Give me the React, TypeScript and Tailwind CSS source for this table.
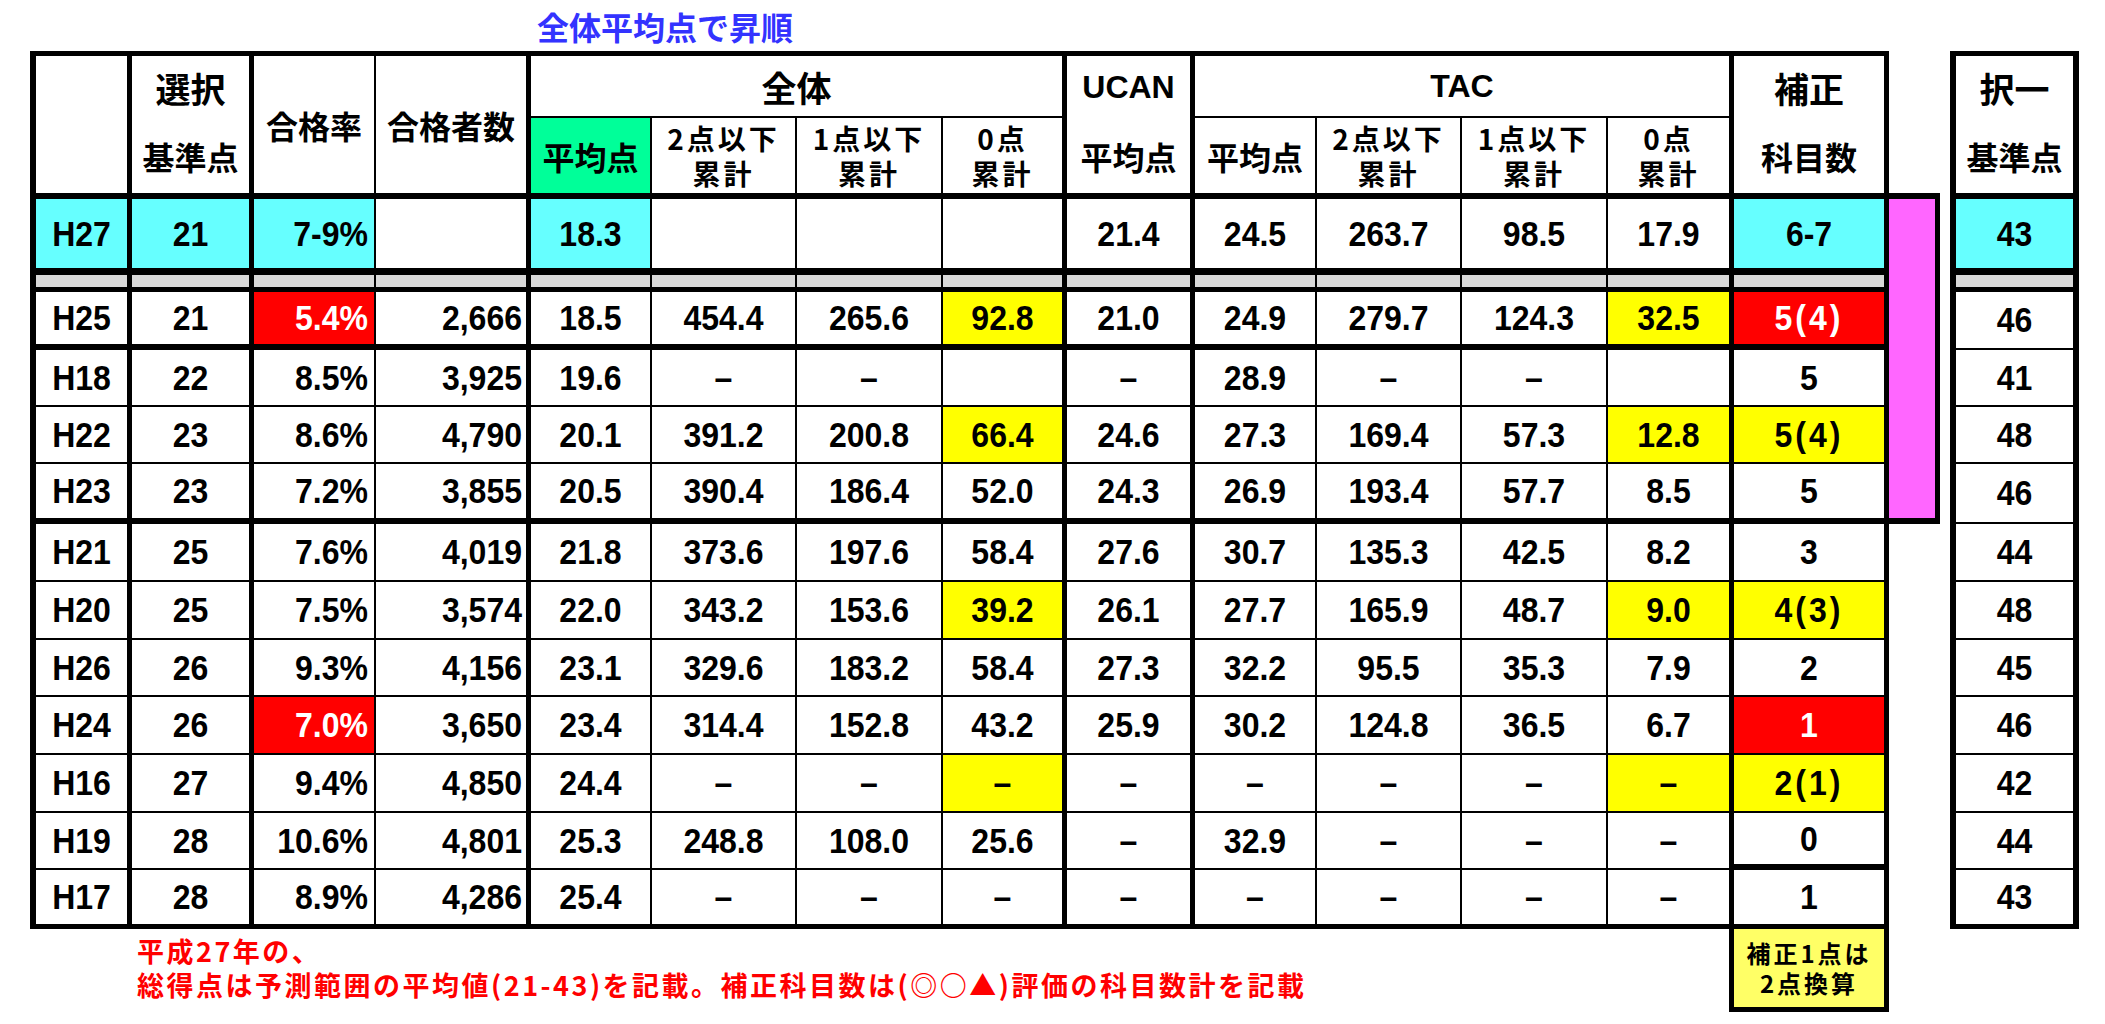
import React from "react";

const JP = "font-['Noto_Sans_CJK_JP',sans-serif]";
const EN = "font-['Liberation_Sans','Noto_Sans_CJK_JP',sans-serif]";

const BR = [
  "border-r-[5px]",
  "border-r-[5px]",
  "border-r-2",
  "border-r-[5px]",
  "border-r-2",
  "border-r-2",
  "border-r-2",
  "border-r-[5px]",
  "border-r-[5px]",
  "border-r-2",
  "border-r-2",
  "border-r-2",
  "border-r-[5px]",
  "border-r-[5px]",
];

const BG: Record<string, string> = {
  c: "bg-[#66ffff]",
  r: "bg-[#ff0000] text-white",
  y: "bg-[#ffff00]",
  w: "bg-white",
};

type RowDef = {
  vals: string[];
  t: string;
  hl?: Record<number, string>;
  bb: string;
  tbb: string;
  hojoBb?: string;
};

const rows: RowDef[] = [
  {
    vals: ["H25", "21", "5.4%", "2,666", "18.5", "454.4", "265.6", "92.8", "21.0", "24.9", "279.7", "124.3", "32.5", "5(4)"],
    t: "46",
    hl: { 2: "r", 7: "y", 12: "y", 13: "r" },
    bb: "border-b-[6px]",
    tbb: "border-b-2",
  },
  {
    vals: ["H18", "22", "8.5%", "3,925", "19.6", "–", "–", "", "–", "28.9", "–", "–", "", "5"],
    t: "41",
    bb: "border-b-2",
    tbb: "border-b-2",
  },
  {
    vals: ["H22", "23", "8.6%", "4,790", "20.1", "391.2", "200.8", "66.4", "24.6", "27.3", "169.4", "57.3", "12.8", "5(4)"],
    t: "48",
    hl: { 7: "y", 12: "y", 13: "y" },
    bb: "border-b-2",
    tbb: "border-b-2",
  },
  {
    vals: ["H23", "23", "7.2%", "3,855", "20.5", "390.4", "186.4", "52.0", "24.3", "26.9", "193.4", "57.7", "8.5", "5"],
    t: "46",
    bb: "border-b-[6px]",
    tbb: "border-b-2",
  },
  {
    vals: ["H21", "25", "7.6%", "4,019", "21.8", "373.6", "197.6", "58.4", "27.6", "30.7", "135.3", "42.5", "8.2", "3"],
    t: "44",
    bb: "border-b-2",
    tbb: "border-b-2",
  },
  {
    vals: ["H20", "25", "7.5%", "3,574", "22.0", "343.2", "153.6", "39.2", "26.1", "27.7", "165.9", "48.7", "9.0", "4(3)"],
    t: "48",
    hl: { 7: "y", 12: "y", 13: "y" },
    bb: "border-b-2",
    tbb: "border-b-2",
  },
  {
    vals: ["H26", "26", "9.3%", "4,156", "23.1", "329.6", "183.2", "58.4", "27.3", "32.2", "95.5", "35.3", "7.9", "2"],
    t: "45",
    bb: "border-b-2",
    tbb: "border-b-2",
  },
  {
    vals: ["H24", "26", "7.0%", "3,650", "23.4", "314.4", "152.8", "43.2", "25.9", "30.2", "124.8", "36.5", "6.7", "1"],
    t: "46",
    hl: { 2: "r", 13: "r" },
    bb: "border-b-2",
    tbb: "border-b-2",
  },
  {
    vals: ["H16", "27", "9.4%", "4,850", "24.4", "–", "–", "–", "–", "–", "–", "–", "–", "2(1)"],
    t: "42",
    hl: { 7: "y", 12: "y", 13: "y" },
    bb: "border-b-2",
    tbb: "border-b-2",
  },
  {
    vals: ["H19", "28", "10.6%", "4,801", "25.3", "248.8", "108.0", "25.6", "–", "32.9", "–", "–", "–", "0"],
    t: "44",
    bb: "border-b-2",
    tbb: "border-b-2",
    hojoBb: "border-b-[6px]",
  },
  {
    vals: ["H17", "28", "8.9%", "4,286", "25.4", "–", "–", "–", "–", "–", "–", "–", "–", "1"],
    t: "43",
    bb: "border-b-[5px]",
    tbb: "border-b-[5px]",
  },
];

const h27 = {
  vals: ["H27", "21", "7-9%", "", "18.3", "", "", "", "21.4", "24.5", "263.7", "98.5", "17.9", "6-7"],
  hl: { 0: "c", 1: "c", 2: "c", 4: "c", 13: "c" } as Record<number, string>,
};

const dataText = `${EN} inline-block scale-y-[1.08] text-[32px] font-bold leading-none`;

function align(i: number) {
  if (i === 2) return "justify-end pr-[6px]";
  if (i === 3) return "justify-end pr-[4px]";
  return "justify-center";
}

function DataRow({
  vals,
  hl,
  bb,
  hojoBb,
}: {
  vals: string[];
  hl?: Record<number, string>;
  bb: string;
  hojoBb?: string;
}) {
  return (
    <>
      {vals.map((v, i) => {
        const key = (hl && hl[i]) || "w";
        const bg = BG[key];
        const b = i === 13 && hojoBb ? hojoBb : bb;
        const first = i === 0 ? "col-start-1 border-l-[6px]" : "";
        const paren = v.includes("(") ? "tracking-[3px]" : "";
        const color = key === "r" ? "text-white" : "text-black";
        return (
          <div
            key={i}
            className={`flex items-center border-black ${first} ${BR[i]} ${b} ${align(i)} ${bg}`}
          >
            {v !== "" && <span className={`${dataText} ${paren} ${color}`}>{v}</span>}
          </div>
        );
      })}
    </>
  );
}

function GrayRow() {
  return (
    <>
      {BR.map((br, i) => (
        <div
          key={i}
          className={`border-black bg-[#d9d9d9] border-b-[5px] ${br} ${i === 0 ? "col-start-1 border-l-[6px]" : ""}`}
        />
      ))}
    </>
  );
}

function TwoLine({ a, b }: { a: string; b: string }) {
  return (
    <p className={`text-center ${JP} text-[28px] font-bold leading-[35px] tracking-[3px] text-black`}>
      {a}
      <br />
      {b}
    </p>
  );
}

const hdrBig = `${JP} text-[35px] font-bold leading-none text-black`;
const hdrMid = `${JP} text-[32px] font-bold leading-none text-black`;

function MainTable() {
  return (
    <div className="grid grid-cols-[102px_122px_122px_155px_121px_145px_146px_124px_128px_122px_145px_146px_126px_155px_51px] grid-rows-[67px_81px_76px_17px_58px_57px_57px_60px_58px_58px_57px_58px_58px_57px_59px_83px]">
      {/* magenta band */}
      <div className="col-start-15 row-start-3 row-span-6 bg-[#ff66ff] border-black border-r-[5px] border-b-[6px]" />

      {/* header row 1 */}
      <div className="row-span-2 border-black border-t-[5px] border-l-[6px] border-r-[5px] border-b-[6px] bg-white" />
      <div className="row-span-2 flex flex-col border-black border-t-[5px] border-r-[5px] border-b-[6px] bg-white">
        <div className={`h-[62px] flex items-center justify-center ${hdrBig}`}>選択</div>
        <div className={`flex-1 flex items-center justify-center ${hdrMid}`}>基準点</div>
      </div>
      <div className={`row-span-2 flex items-center justify-center border-black border-t-[5px] border-r-2 border-b-[6px] bg-white ${hdrMid}`}>
        合格率
      </div>
      <div className={`row-span-2 flex items-center justify-center border-black border-t-[5px] border-r-[5px] border-b-[6px] bg-white ${hdrMid}`}>
        合格者数
      </div>
      <div className={`col-span-4 flex items-center justify-center border-black border-t-[5px] border-r-[5px] border-b-2 bg-white ${hdrBig}`}>
        全体
      </div>
      <div className="row-span-2 flex flex-col border-black border-t-[5px] border-r-[5px] border-b-[6px] bg-white">
        <div className={`h-[62px] flex items-center justify-center ${EN} text-[32px] font-bold leading-none`}>UCAN</div>
        <div className={`flex-1 flex items-center justify-center ${hdrMid}`}>平均点</div>
      </div>
      <div className={`col-span-4 flex items-center justify-center border-black border-t-[5px] border-r-[5px] border-b-2 bg-white ${EN} text-[32px] font-bold leading-none`}>
        TAC
      </div>
      <div className="row-span-2 flex flex-col border-black border-t-[5px] border-r-[5px] border-b-[6px] bg-white">
        <div className={`h-[62px] flex items-center justify-center ${hdrBig}`}>補正</div>
        <div className={`flex-1 flex items-center justify-center ${hdrMid}`}>科目数</div>
      </div>
      <div className="row-span-2 border-black border-b-[6px]" />

      {/* header row 2 */}
      <div className={`flex items-center justify-center border-black border-r-2 border-b-[6px] bg-[#00ff99] ${hdrMid}`}>平均点</div>
      <div className="flex items-center justify-center border-black border-r-2 border-b-[6px] bg-white">
        <TwoLine a="2点以下" b="累計" />
      </div>
      <div className="flex items-center justify-center border-black border-r-2 border-b-[6px] bg-white">
        <TwoLine a="1点以下" b="累計" />
      </div>
      <div className="flex items-center justify-center border-black border-r-[5px] border-b-[6px] bg-white">
        <TwoLine a="0点" b="累計" />
      </div>
      <div className={`flex items-center justify-center border-black border-r-2 border-b-[6px] bg-white ${hdrMid}`}>平均点</div>
      <div className="flex items-center justify-center border-black border-r-2 border-b-[6px] bg-white">
        <TwoLine a="2点以下" b="累計" />
      </div>
      <div className="flex items-center justify-center border-black border-r-2 border-b-[6px] bg-white">
        <TwoLine a="1点以下" b="累計" />
      </div>
      <div className="flex items-center justify-center border-black border-r-[5px] border-b-[6px] bg-white">
        <TwoLine a="0点" b="累計" />
      </div>

      {/* H27 */}
      <DataRow vals={h27.vals} hl={h27.hl} bb="border-b-[7px]" />
      <GrayRow />
      {rows.map((r, idx) => (
        <DataRow key={idx} vals={r.vals} hl={r.hl} bb={r.bb} hojoBb={r.hojoBb} />
      ))}

      {/* footnote row */}
      <div className="col-start-1" />
      <p className={`col-span-11 pl-[5px] pt-[5px] ${JP} text-[27px] font-bold leading-[34px] tracking-[2.5px] text-[#ff0000] whitespace-nowrap`}>
        平成27年の、
        <br />
        総得点は予測範囲の平均値(21-43)を記載。補正科目数は(◎○▲)評価の科目数計を記載
      </p>
      <div className="border-black border-r-[5px]" />
      <div className="flex items-center justify-center border-black border-r-[5px] border-b-[5px] bg-[#ffff66]">
        <p className={`text-center ${JP} text-[24px] font-bold leading-[30px] tracking-[3px] text-black`}>
          補正1点は
          <br />
          2点換算
        </p>
      </div>
    </div>
  );
}

function TakuTable() {
  const cell = "flex items-center justify-center border-black border-l-[6px] border-r-[6px]";
  return (
    <div className="grid grid-cols-[129px] grid-rows-[148px_76px_17px_58px_57px_57px_60px_58px_58px_57px_58px_58px_57px_59px]">
      <div className="flex flex-col border-black border-l-[6px] border-r-[6px] border-t-[5px] border-b-[6px] bg-white">
        <div className={`h-[62px] flex items-center justify-center ${hdrBig}`}>択一</div>
        <div className={`flex-1 flex items-center justify-center ${hdrMid}`}>基準点</div>
      </div>
      <div className={`${cell} border-b-[7px] bg-[#66ffff]`}>
        <span className={`${dataText} text-black`}>43</span>
      </div>
      <div className="border-black border-l-[6px] border-r-[6px] border-b-[5px] bg-[#d9d9d9]" />
      {rows.map((r, idx) => (
        <div key={idx} className={`${cell} ${r.tbb} bg-white`}>
          <span className={`${dataText} text-black`}>{r.t}</span>
        </div>
      ))}
    </div>
  );
}

export default function App() {
  return (
    <div className="w-[2105px] h-[1024px] bg-white overflow-hidden">
      <div className={`h-[51px] pl-[537px] flex items-center ${JP} text-[32px] font-bold leading-none text-[#3333ff]`}>
        全体平均点で昇順
      </div>
      <div className="flex items-start pl-[30px] gap-[10px]">
        <MainTable />
        <TakuTable />
      </div>
    </div>
  );
}
